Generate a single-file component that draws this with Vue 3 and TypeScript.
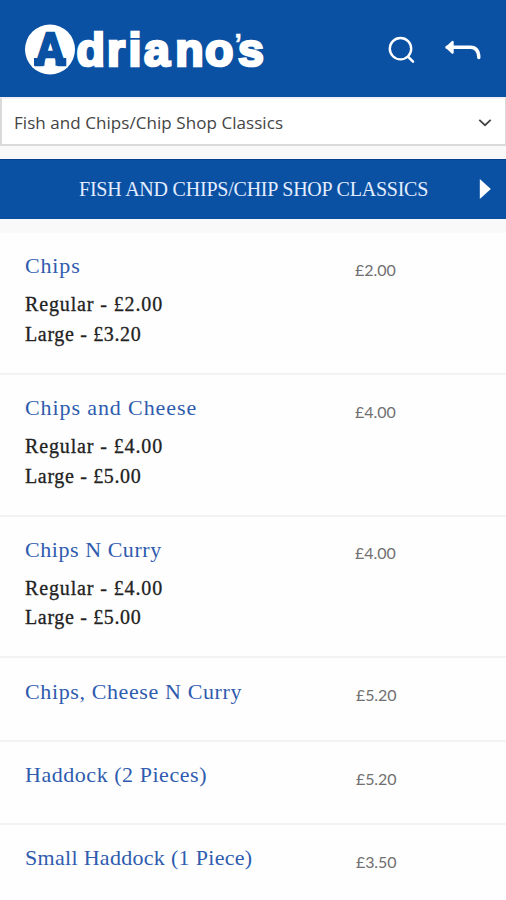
<script setup lang="ts">
interface MenuItem {
  name: string
  price: string
  tracking: number
  options?: string[]
}

const category = 'Fish and Chips/Chip Shop Classics'

const items: MenuItem[] = [
  { name: 'Chips', price: '£2.00', tracking: 0.85, options: ['Regular - £2.00', 'Large - £3.20'] },
  { name: 'Chips and Cheese', price: '£4.00', tracking: 0.9, options: ['Regular - £4.00', 'Large - £5.00'] },
  { name: 'Chips N Curry', price: '£4.00', tracking: 0.55, options: ['Regular - £4.00', 'Large - £5.00'] },
  { name: 'Chips, Cheese N Curry', price: '£5.20', tracking: 0.62 },
  { name: 'Haddock (2 Pieces)', price: '£5.20', tracking: 0.54 },
  { name: 'Small Haddock (1 Piece)', price: '£3.50', tracking: 0.3 },
]
</script>

<template>
  <div class="screen">
    <header class="header">
      <svg class="logo" width="246" height="60" viewBox="0 0 246 60" role="img" aria-label="Adriano's">
        <circle cx="26" cy="30.5" r="25" fill="#fff" />
        <text class="logo-initial" x="11" y="45.5" textLength="30.5" lengthAdjust="spacingAndGlyphs">A</text>
        <path d="M10 39 H20.5 V46.7 H10 Z M31.5 39 H42.3 V46.7 H31.5 Z" fill="#0a51a4" />
        <text class="logo-text" x="52.4 83 104.4 120 151.3 181 210.3 214" y="46.5">driano<tspan class="logo-mark" dy="-12.5">’</tspan><tspan dy="12.5">s</tspan></text>
      </svg>
      <div class="actions">
        <svg width="28" height="28" viewBox="0 0 28 28" fill="none" stroke="#fff" stroke-linecap="round">
          <circle cx="13.5" cy="12.7" r="10.7" stroke-width="2.4" />
          <path d="M21.2 20.8 L26 25.6" stroke-width="2.6" />
        </svg>
        <svg width="38" height="24" viewBox="0 0 38 24" fill="none" stroke="#fff" stroke-width="3.4" stroke-linecap="round" stroke-linejoin="round">
          <path d="M4 9.3 H27.5 Q35.5 9.3 35.8 19.5" />
          <path d="M9.5 4 L4 9.3 L9.5 14.6 Z" fill="#fff" stroke-width="2.4" />
        </svg>
      </div>
    </header>

    <div class="select">
      <span>{{ category }}</span>
      <svg width="14" height="9" viewBox="0 0 14 9" fill="none" stroke="#444" stroke-width="1.8">
        <path d="M1.3 1.9 L7 7.2 L12.7 1.9" />
      </svg>
    </div>

    <div class="banner">
      <h1>{{ category }}</h1>
      <svg width="12" height="20" viewBox="0 0 12 20"><path d="M.8 0 L11.8 10 L.8 20 Z" fill="#fff" /></svg>
    </div>

    <main class="menu">
      <article v-for="item in items" :key="item.name" class="item" :class="{ tall: item.options }">
        <div class="details">
          <h2 :style="{ letterSpacing: `${item.tracking}px` }">{{ item.name }}</h2>
          <p v-for="option in item.options" :key="option">{{ option }}</p>
        </div>
        <span class="price">{{ item.price }}</span>
      </article>
    </main>
  </div>
</template>

<style>
body {
  margin: 0;
  overflow: hidden;
}
</style>

<style scoped>
.screen {
  box-sizing: border-box;
  width: 100%;
  height: 900px;
  overflow: hidden;
  background: #f9f9f9;
}
.header {
  display: flex;
  align-items: center;
  justify-content: space-between;
  box-sizing: border-box;
  height: 97px;
  padding: 0 25px 0 24px;
  background: #0a51a4;
}
.logo {
  display: block;
  margin-top: 1px;
}
.logo-initial {
  font: bold 47px "Liberation Sans", Arial, sans-serif;
  fill: #0a51a4;
  stroke: #0a51a4;
  stroke-width: 2.6px;
}
.logo-text {
  font: bold 46.5px "Liberation Sans", Arial, sans-serif;
  fill: #fff;
  stroke: #fff;
  stroke-width: 2.7px;
}
.logo-mark {
  font-size: 28px;
  stroke-width: 0.3px;
}
.actions {
  display: flex;
  align-items: center;
  gap: 28px;
  margin-top: 2px;
}
.select {
  display: flex;
  align-items: center;
  justify-content: space-between;
  box-sizing: border-box;
  height: 49px;
  padding: 2px 13px 0 12px;
  border: 2px solid #dadada;
  border-width: 2px 1px 2px 2px;
  border-top-color: #f1f1f1;
  background: #fff;
  font: 17px/24px "Open Sans", sans-serif;
  letter-spacing: 0.06px;
  color: #444;
}
.banner {
  display: flex;
  align-items: center;
  justify-content: space-between;
  box-sizing: border-box;
  height: 60px;
  margin: 13px 0 14px;
  padding: 0 15px 2px 79px;
  border-top: 1px solid #07408f;
  background: #0a51a4;
}
.banner h1 {
  margin: 0;
  font: 20px/28px "Liberation Serif", serif;
  letter-spacing: -0.22px;
  text-transform: uppercase;
  white-space: nowrap;
  color: #e3edff;
}
.menu {
  height: 667px;
  background: #fefefe;
}
.item {
  display: flex;
  align-items: flex-start;
  box-sizing: border-box;
  height: 83.3px;
  padding: 19.4px 25px 0;
  border-bottom: 2px solid #f3f3f3;
}
.item.tall {
  height: 141.8px;
  padding-top: 19.3px;
}
.details {
  width: 331px;
}
.tall .details {
  width: 330px;
}
.item h2 {
  margin: 0 0 10px;
  font: 22px/28px "Liberation Serif", serif;
  white-space: nowrap;
  color: #2f5cae;
}
.item p {
  margin: 0;
  font: 20px/29.5px "Liberation Serif", serif;
  letter-spacing: 0.65px;
  color: #222;
  -webkit-text-stroke: 0.3px #222;
}
.item p:first-of-type {
  letter-spacing: 0.87px;
}
.price {
  padding-top: 5.6px;
  font: 16px/24px Lato, sans-serif;
  color: #707070;
}
.item:not(.tall) .price {
  letter-spacing: -0.1px;
}
</style>
